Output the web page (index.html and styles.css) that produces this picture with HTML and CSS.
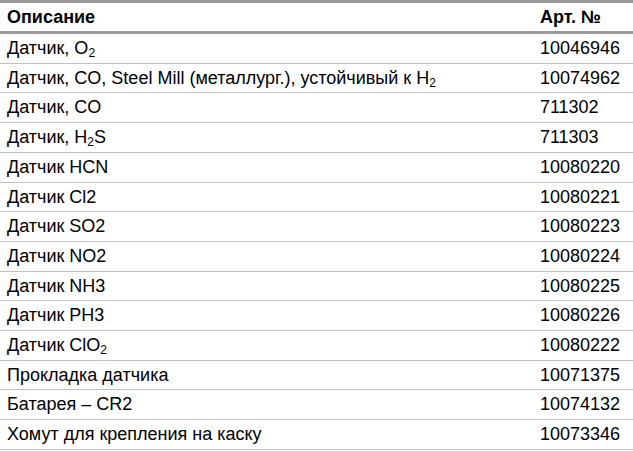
FILE: index.html
```html
<!DOCTYPE html>
<html lang="ru">
<head>
<meta charset="utf-8">
<link rel="stylesheet" href="styles.css">
</head>
<body>
<table class="parts">
  <thead>
    <tr><th class="desc">Описание</th><th class="art">Арт. №</th></tr>
  </thead>
  <tbody>
    <tr><td>Датчик, O<sub>2</sub></td><td class="art">10046946</td></tr>
    <tr><td>Датчик, CO, Steel Mill (металлург.), устойчивый к H<sub>2</sub></td><td class="art">10074962</td></tr>
    <tr><td>Датчик, CO</td><td class="art">711302</td></tr>
    <tr><td>Датчик, H<sub>2</sub>S</td><td class="art">711303</td></tr>
    <tr><td>Датчик HCN</td><td class="art">10080220</td></tr>
    <tr><td>Датчик Cl2</td><td class="art">10080221</td></tr>
    <tr><td>Датчик SO2</td><td class="art">10080223</td></tr>
    <tr><td>Датчик NO2</td><td class="art">10080224</td></tr>
    <tr><td>Датчик NH3</td><td class="art">10080225</td></tr>
    <tr><td>Датчик PH3</td><td class="art">10080226</td></tr>
    <tr><td>Датчик ClO<sub>2</sub></td><td class="art">10080222</td></tr>
    <tr><td>Прокладка датчика</td><td class="art">10071375</td></tr>
    <tr><td>Батарея – CR2</td><td class="art">10074132</td></tr>
    <tr><td>Хомут для крепления на каску</td><td class="art">10073346</td></tr>
  </tbody>
</table>
</body>
</html>
```
FILE: styles.css
```css
html, body {
  margin: 0;
  padding: 0;
  background: #ffffff;
}
body {
  font-family: "Liberation Sans", Arial, sans-serif;
  font-size: 18px;
  color: #000000;
}
.parts {
  width: 633px;
  border-collapse: collapse;
  border-top: 3px solid #9a9a9a;
}
.parts th {
  font-weight: bold;
  text-align: left;
  padding: 0 7px;
  line-height: 28px;
  border-bottom: 3px solid #9a9a9a;
}
.parts td {
  padding: 0 7px;
  line-height: 28.7px;
  border-bottom: 1px solid #c2c2c2;
  vertical-align: middle;
  white-space: nowrap;
}
.parts .art {
  width: 77px;
  padding-left: 0;
  padding-right: 13px;
}
.parts sub {
  font-size: 12px;
  line-height: 0;
  vertical-align: -3px;
}
```
